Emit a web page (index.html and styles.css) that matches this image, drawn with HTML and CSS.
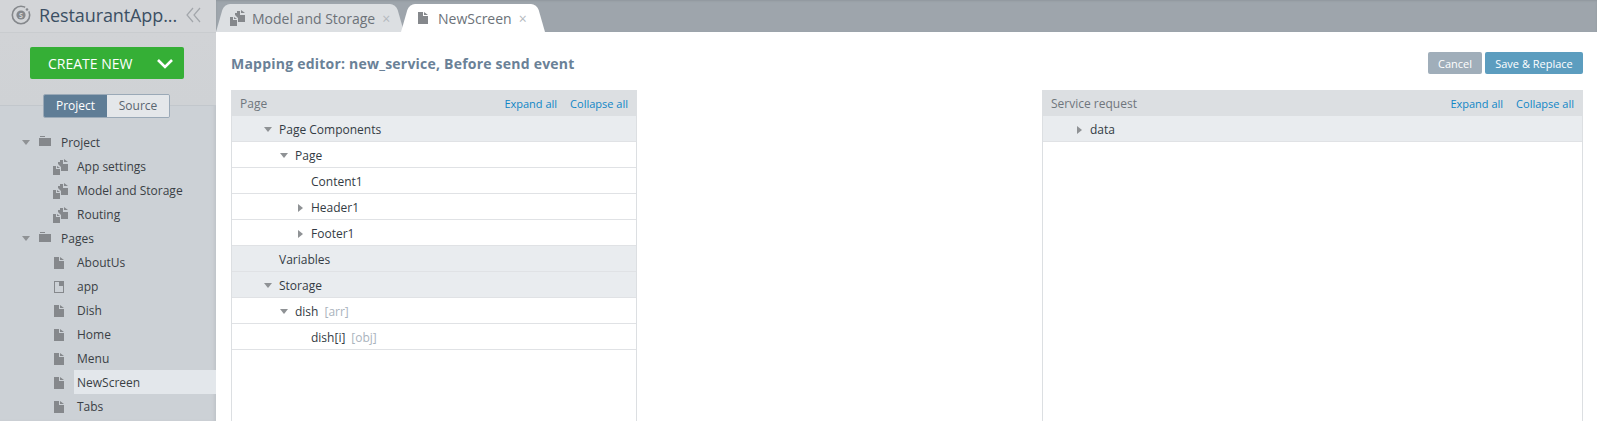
FILE: index.html
```html
<!DOCTYPE html>
<html lang="en">
<head>
<meta charset="utf-8">
<title>Mapping editor</title>
<link rel="stylesheet" href="styles.css">
</head>
<body>
<svg class="defs" width="0" height="0" aria-hidden="true">
  <symbol id="folder" viewBox="0 0 12 10"><path d="M1 0h5v1H1zM0 2h12v8H0z" fill="#85888c"/></symbol>
  <symbol id="file" viewBox="0 0 10 12"><path d="M0 0h5v4h5v8H0zM6 0l4 3H6z" fill="#85888c"/></symbol>
  <symbol id="doc" viewBox="0 0 10 12"><path d="M0 0h10v12H0zM1 1v10h8V5H5V1z" fill="#85888c" fill-rule="evenodd"/><path d="M6 1l3 3H6z" fill="#85888c"/></symbol>
  <symbol id="files" viewBox="0 0 15 16"><path d="M0 7h3v3h4v6H0zM4 7l3 2H4zM7 1h3v4h5v7H8V8L5 5V3H7zM11 0l4 3h-4z" fill="#85888c"/></symbol>
</svg>
<aside class="sidebar">
  <header class="brand">
    <svg class="logo" viewBox="0 0 20 20"><circle cx="10" cy="10" r="8.7" fill="none" stroke="#85888c" stroke-width="1.6"/><circle cx="10" cy="10" r="4.6" fill="#85888c"/><circle cx="16.5" cy="4" r="2.8" fill="#d3d5d8"/><circle cx="16" cy="4.5" r="1.3" fill="#85888c"/><text class="logo-s" x="10" y="12.6">S</text></svg>
    <span class="brand-name">RestaurantApp...</span>
    <svg class="collapse" viewBox="0 0 15 16"><path d="M7 1L1 8l6 7M14 1L8 8l6 7" fill="none" stroke="#a2a6ab" stroke-width="1.2"/></svg>
  </header>
  <div class="actions">
    <button class="create"><span>CREATE NEW</span>
      <svg class="create-chev" viewBox="0 0 18 11"><path d="M2 2l7 7 7-7" fill="none" stroke="#fff" stroke-width="2.6"/></svg>
    </button>
    <div class="switch"><span class="switch-on">Project</span><span class="switch-off">Source</span></div>
  </div>
  <ul class="tree">
    <li class="group"><i class="tri"></i><svg class="ico-folder"><use href="#folder"/></svg><span>Project</span></li>
    <li class="leaf"><svg class="ico-files"><use href="#files"/></svg><span class="leaf-label">App settings</span></li>
    <li class="leaf"><svg class="ico-files"><use href="#files"/></svg><span class="leaf-label">Model and Storage</span></li>
    <li class="leaf"><svg class="ico-files"><use href="#files"/></svg><span class="leaf-label">Routing</span></li>
    <li class="group"><i class="tri"></i><svg class="ico-folder"><use href="#folder"/></svg><span>Pages</span></li>
    <li class="leaf"><svg class="ico-file"><use href="#file"/></svg><span class="leaf-label">AboutUs</span></li>
    <li class="leaf"><svg class="ico-file"><use href="#doc"/></svg><span class="leaf-label">app</span></li>
    <li class="leaf"><svg class="ico-file"><use href="#file"/></svg><span class="leaf-label">Dish</span></li>
    <li class="leaf"><svg class="ico-file"><use href="#file"/></svg><span class="leaf-label">Home</span></li>
    <li class="leaf"><svg class="ico-file"><use href="#file"/></svg><span class="leaf-label">Menu</span></li>
    <li class="leaf"><svg class="ico-file"><use href="#file"/></svg><span class="leaf-label selected">NewScreen</span></li>
    <li class="leaf"><svg class="ico-file"><use href="#file"/></svg><span class="leaf-label">Tabs</span></li>
  </ul>
</aside>
<main class="main">
  <nav class="tabs">
    <div class="tab"><svg class="ico-files"><use href="#files"/></svg><span>Model and Storage</span><b class="close">×</b></div>
    <div class="tab tab-active"><svg class="ico-file"><use href="#file"/></svg><span>NewScreen</span><b class="close">×</b></div>
  </nav>
  <section class="editor">
    <div class="editor-head">
      <h1>Mapping editor: new_service, Before send event</h1>
      <div class="buttons"><button class="btn btn-cancel">Cancel</button><button class="btn btn-save">Save &amp; Replace</button></div>
    </div>
    <div class="panels">
      <div class="panel panel-left">
        <div class="panel-head"><span>Page</span><span class="links"><a>Expand all</a><a>Collapse all</a></span></div>
        <div class="row shade l1"><i class="tri"></i>Page Components</div>
        <div class="row l2"><i class="tri"></i>Page</div>
        <div class="row l3">Content1</div>
        <div class="row l3"><i class="tri-r"></i>Header1</div>
        <div class="row l3"><i class="tri-r"></i>Footer1</div>
        <div class="row shade l1">Variables</div>
        <div class="row shade l1"><i class="tri"></i>Storage</div>
        <div class="row l2"><i class="tri"></i>dish<em>[arr]</em></div>
        <div class="row l3">dish[i]<em>[obj]</em></div>
      </div>
      <div class="panel panel-right">
        <div class="panel-head"><span>Service request</span><span class="links"><a>Expand all</a><a>Collapse all</a></span></div>
        <div class="row shade l1"><i class="tri-r"></i>data</div>
      </div>
    </div>
  </section>
</main>
</body>
</html>
```
FILE: styles.css
```css
* { box-sizing: border-box; }
html, body { height: 100%; }
body {
  margin: 0;
  display: flex;
  height: 421px;
  overflow: hidden;
  font-family: "Open Sans", sans-serif;
  font-size: 12px;
  color: #33404d;
  background: #fff;
}
.defs { position: absolute; }
.sidebar {
  width: 216px;
  flex: none;
  background: #ccd1d6;
  box-shadow: inset -3px 0 3px -1px #c0c4c9;
}
.brand {
  height: 33px;
  display: flex;
  align-items: center;
  padding-left: 11px;
  background: #d3d5d8;
  border-bottom: 1px solid #c9cccf;
}
.logo { width: 20px; height: 20px; flex: none; margin-top: -2px; }
.logo-s { font: 700 7px "Open Sans", sans-serif; fill: #d3d5d8; text-anchor: middle; }
.brand-name { margin-left: 8px; font-size: 18px; color: #3b4f63; white-space: nowrap; letter-spacing: -.1px; margin-top: -2px; }
.collapse { width: 15px; height: 16px; margin-left: 9px; flex: none; margin-top: -2px; }
.actions {
  height: 73px;
  padding: 14px 2px 0 0;
  display: flex;
  flex-direction: column;
  align-items: center;
  background: linear-gradient(#d1d3d6, #cfd2d5);
  border-bottom: 1px solid #c2c7cc;
}
.create {
  width: 154px;
  height: 32px;
  flex: none;
  border: 0;
  border-radius: 2px;
  background: #35af36;
  color: #fff;
  font: 14px "Open Sans", sans-serif;
  display: flex;
  align-items: center;
  justify-content: space-between;
  padding: 0 10px 0 18px;
}
.create-chev { width: 18px; height: 11px; }
.switch {
  width: 127px;
  height: 24px;
  flex: none;
  margin: 15px 1px 0 0;
  display: flex;
  border-radius: 2px;
  border: 1px solid #9aa9b7;
  font-size: 12px;
  line-height: 22px;
  text-align: center;
  overflow: hidden;
}
.switch-on { width: 63px; background: #5f7d96; color: #fff; }
.switch-off { flex: 1; background: #e4e7ea; color: #5a6570; }
.tree { list-style: none; margin: 0; padding: 24px 0 0; }
.tree li { height: 24px; display: flex; align-items: center; white-space: nowrap; color: #3a3f45; }
.tree .group { padding-bottom: 2px; }
.tree .group:first-child { height: 25px; padding-bottom: 1px; }
.group { padding-left: 22px; }
.group .tri { margin-right: 9px; }
.ico-folder { width: 12px; height: 10px; margin-right: 10px; margin-top: -3px; }
.leaf { padding-left: 54px; }
.ico-files { width: 15px; height: 16px; flex: none; margin-left: -1px; margin-right: 6px; }
.ico-file { width: 10px; height: 12px; flex: none; margin-right: 10px; }
.leaf-label { flex: 1; align-self: flex-start; height: 24px; margin-top: -1px; line-height: 26px; padding-left: 3px; }
.selected { background: #e3e7eb; }
.tri {
  display: inline-block;
  width: 0; height: 0;
  border-left: 4px solid transparent;
  border-right: 4px solid transparent;
  border-top: 5px solid #8f9295;
}
.tri-r {
  display: inline-block;
  width: 0; height: 0;
  border-top: 4px solid transparent;
  border-bottom: 4px solid transparent;
  border-left: 5px solid #8f9295;
}
.main { flex: 1; min-width: 0; display: flex; flex-direction: column; }
.tabs {
  height: 32px;
  flex: none;
  background: #9ea5ac;
  display: flex;
  align-items: flex-end;
  box-shadow: inset 0 1px 2px #90979e;
}
.tab {
  position: relative;
  isolation: isolate;
  height: 28px;
  width: 188px;
  display: flex;
  align-items: center;
  padding-left: 14px;
  font-size: 14px;
  color: #6c7279;
  --tab-bg: #dcdfe2;
}
.tab::before,
.tab::after {
  content: "";
  position: absolute;
  z-index: -1;
  top: 0;
  bottom: 0;
  background: var(--tab-bg);
  transform-origin: bottom;
}
.tab::before { left: 0; right: 50%; transform: skewX(-16deg); border-radius: 6px 0 0 0; }
.tab::after { left: 50%; right: 0; transform: skewX(16deg); border-radius: 0 6px 0 0; }
.tab span { margin-left: 7px; }
.tab .ico-files { margin: 0; }
.tab-active { width: 144px; margin-left: -3px; padding-left: 17px; --tab-bg: #fff; z-index: 1; }
.tab-active .ico-file { margin: 0; }
.tab-active span { margin-left: 10px; }
.close { margin-left: 7px; font-weight: 400; font-size: 14px; color: #b4b9be; }
.editor { flex: 1; padding: 20px 14px 0 15px; min-height: 0; display: flex; flex-direction: column; }
.editor-head { display: flex; justify-content: space-between; align-items: flex-start; height: 38px; flex: none; }
h1 { margin: 2px 0 0; font-size: 14px; font-weight: 700; color: #6a8197; line-height: 20px; letter-spacing: .22px; }
.buttons { display: flex; gap: 3px; }
.btn {
  height: 22px;
  border: 0;
  border-radius: 2px;
  color: #fff;
  font: 11px "Open Sans", sans-serif;
  padding: 0;
}
.btn-cancel { width: 54px; background: #a0aeba; }
.btn-save { width: 98px; background: #5c9dbf; }
.panels { display: flex; justify-content: space-between; flex: 1; min-height: 0; }
.panel { border: 1px solid #dcdfe2; border-width: 0 1px; }
.panel-left { width: 406px; }
.panel-right { width: 541px; }
.panel-head {
  height: 26px;
  display: flex;
  justify-content: space-between;
  align-items: center;
  padding: 0 9px;
  background: #dcdfe2;
  color: #6f767d;
  margin: 0 -1px;
}
.links { display: flex; gap: 13px; font-size: 11px; color: #0f86c6; }
.row {
  height: 26px;
  display: flex;
  align-items: center;
  padding-top: 2px;
  border-bottom: 1px solid #e0e2e5;
  color: #333b44;
  white-space: nowrap;
}
.shade { background: #e9ecef; }
.l1 { padding-left: 47px; }
.l2 { padding-left: 63px; }
.l3 { padding-left: 79px; }
.row .tri { margin-left: -15px; margin-right: 7px; }
.row .tri-r { margin-left: -13px; margin-right: 8px; }
em { font-style: normal; color: #aab3bd; margin-left: 6px; }
```
